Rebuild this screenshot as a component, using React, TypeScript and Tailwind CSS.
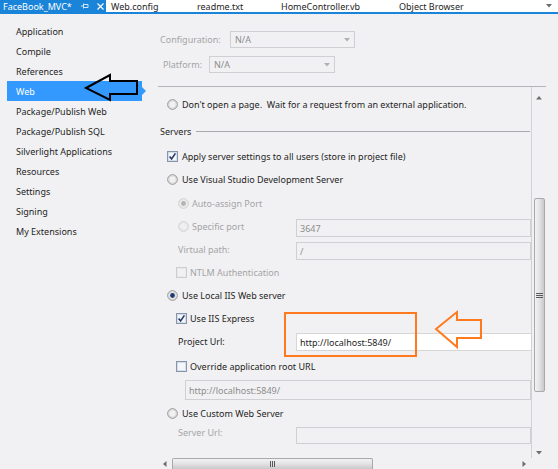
import React from "react";

// VS2012 project properties, "Web" tab
const navItems = [
  "Application",
  "Compile",
  "References",
  "Web",
  "Package/Publish Web",
  "Package/Publish SQL",
  "Silverlight Applications",
  "Resources",
  "Settings",
  "Signing",
  "My Extensions",
];

function Radio({ checked = false, disabled = false }: { checked?: boolean; disabled?: boolean }) {
  return (
    <svg width="11" height="11" viewBox="0 0 11 11" className="flex-none">
      <circle cx="5.5" cy="5.5" r="4.8" fill={disabled ? "#efeff1" : "#f1f1f1"} stroke={disabled ? "#cdcdcd" : "#8d8d8d"} />
      <circle cx="5.5" cy="5.5" r="3.6" fill="none" stroke={disabled ? "#e6e6e6" : "#d6d6d6"} strokeWidth="0.8" />
      {checked && <circle cx="5.5" cy="5.5" r="2.4" fill={disabled ? "#b3b3b3" : "#1c3c70"} />}
    </svg>
  );
}

function Check({ checked = false, disabled = false }: { checked?: boolean; disabled?: boolean }) {
  return (
    <svg width="11" height="11" viewBox="0 0 11 11" className="flex-none">
      <rect x="0.5" y="0.5" width="10" height="10" fill={disabled ? "#f1f1f3" : "#f4f6fa"} stroke={disabled ? "#cdcdcd" : "#8795ab"} />
      <rect x="1.5" y="1.5" width="8" height="8" fill="none" stroke={disabled ? "#e8e8e8" : "#cdd6e6"} strokeWidth="0.8" />
      {checked && <path d="M2.6 5.4 L4.6 7.9 L8.4 2.4" fill="none" stroke="#27376a" strokeWidth="1.6" />}
    </svg>
  );
}

function Select({ w, text }: { w: string; text: string }) {
  return (
    <div className={`${w} h-[17px] flex items-center border border-[#cfcfd4] bg-[#f1f1f3] pl-[4px] pr-[4px] text-[#8c8c8c]`}>
      <span className="flex-1">{text}</span>
      <svg width="6" height="4" viewBox="0 0 6 4">
        <path d="M0 0 H6 L3 3.5 Z" fill="#b0b0b0" />
      </svg>
    </div>
  );
}

function Box({ text = "", white = false, h = "h-[18px]", extra = "" }: { text?: string; white?: boolean; h?: string; extra?: string }) {
  return (
    <div
      className={`${h} ${extra} flex-1 flex items-center pl-[3px] border ${
        white ? "bg-white border-[#d6d6d6] border-r-0 text-[#1e1e1e]" : "bg-[#f1f1f3] border-[#cfcfd4] text-[#8c8c8c]"
      }`}
    >
      {text}
    </div>
  );
}

function TabBar() {
  return (
    <div className="h-[14px] flex items-stretch bg-white border-b-2 border-[#1a84d8] text-[#1e1e1e]">
      <div className="w-[106px] flex items-center bg-[#1a84d8] text-white pl-[3px]">
        <span>FaceBook_MVC*</span>
        <svg width="8" height="6" viewBox="0 0 8 6" className="ml-[9px]">
          <path d="M0 3 H2.5 M2.5 0.5 V5.5 M2.5 1.5 H7 V4.5 H2.5" fill="none" stroke="#cfe6fa" strokeWidth="1" />
        </svg>
        <svg width="7" height="7" viewBox="0 0 7 7" className="ml-[8px]">
          <path d="M0.5 0.5 L6.5 6.5 M6.5 0.5 L0.5 6.5" stroke="#ffffff" strokeWidth="1.2" />
        </svg>
      </div>
      <div className="w-[86px] flex items-center pl-[5px]">Web.config</div>
      <div className="w-[84px] flex items-center pl-[5px]">readme.txt</div>
      <div className="w-[118px] flex items-center pl-[5px]">HomeController.vb</div>
      <div className="flex items-center pl-[5px]">Object Browser</div>
      <div className="ml-auto flex items-center pr-[6px]">
        <svg width="6" height="4" viewBox="0 0 6 4">
          <path d="M0 0 H6 L3 3.5 Z" fill="#6d6d6d" />
        </svg>
      </div>
    </div>
  );
}

function Nav() {
  return (
    <div className="w-[153px] flex-none pt-[7px]">
      {navItems.map((item) =>
        item === "Web" ? (
          <div key={item} className="relative h-[20px] ml-[7px] w-[135px] flex items-center pl-[9px] bg-[#3399ff] text-white">
            {item}
            <svg width="6" height="10" viewBox="0 0 6 10" className="absolute right-[-5px] top-[5px]">
              <path d="M0 0 L5 5 L0 10 Z" fill="#3399ff" />
            </svg>
          </div>
        ) : (
          <div key={item} className="h-[20px] flex items-center pl-[16px]">
            {item}
          </div>
        )
      )}
    </div>
  );
}

const muted = "text-[#a4a4a6]";

function Content() {
  return (
    <div className="flex-1 flex flex-col">
      {/* configuration / platform */}
      <div className="h-[72px] pt-[17px]">
        <div className="flex items-center h-[17px]">
          <span className={`ml-[7px] w-[70px] ${muted}`}>Configuration:</span>
          <Select w="w-[125px]" text="N/A" />
        </div>
        <div className="flex items-center h-[17px] mt-[8px]">
          <span className={`ml-[10px] w-[46px] ${muted}`}>Platform:</span>
          <Select w="w-[126px]" text="N/A" />
        </div>
      </div>

      {/* scrolling region */}
      <div className="ml-[5px] w-[388px] flex-1 flex flex-col border-t border-[#b4b4b8]">
        <div className="flex h-[371px]">
          <div className="w-[373px] overflow-hidden flex flex-col pt-[6px]">
            <div className="h-[23px] flex items-center pl-[9px] gap-[4px] whitespace-nowrap">
              <Radio />
              <span>Don't open a page.&nbsp; Wait for a request from an external application.</span>
            </div>

            <div className="h-[23px] mt-[4px] flex items-center pl-[2px]">
              <span>Servers</span>
              <div className="flex-1 h-px bg-[#a9a9ad] ml-[5px] mr-[1px]" />
            </div>

            <div className="h-[23px] mt-[2px] flex items-center pl-[9px] gap-[4px] whitespace-nowrap">
              <Check checked />
              <span>Apply server settings to all users (store in project file)</span>
            </div>
            <div className="h-[23px] flex items-center pl-[9px] gap-[4px]">
              <Radio />
              <span>Use Visual Studio Development Server</span>
            </div>

            <div className={`h-[23px] mt-[1px] flex items-center pl-[20px] gap-[3px] ${muted}`}>
              <Radio checked disabled />
              <span>Auto-assign Port</span>
            </div>
            <div className={`h-[23px] flex items-center pl-[20px] ${muted}`}>
              <Radio disabled />
              <span className="ml-[3px] w-[104px]">Specific port</span>
              <Box text="3647" extra="mt-[3px]" />
            </div>
            <div className={`h-[23px] flex items-center pl-[20px] ${muted}`}>
              <span className="w-[118px]">Virtual path:</span>
              <Box text="/" extra="mt-[3px]" />
            </div>
            <div className={`h-[23px] flex items-center pl-[18px] gap-[3px] ${muted}`}>
              <Check disabled />
              <span>NTLM Authentication</span>
            </div>

            <div className="h-[23px] flex items-center pl-[9px] gap-[4px]">
              <Radio checked />
              <span>Use Local IIS Web server</span>
            </div>
            <div className="h-[23px] flex items-center pl-[18px] gap-[3px]">
              <Check checked />
              <span>Use IIS Express</span>
            </div>
            <div className="h-[23px] flex items-center pl-[20px]">
              <span className="w-[118px]">Project Url:</span>
              <Box text="http://localhost:5849/" white extra="mt-[1px]" />
            </div>

            <div className="h-[23px] mt-[2px] flex items-center pl-[18px] gap-[3px]">
              <Check />
              <span>Override application root URL</span>
            </div>
            <div className="h-[24px] flex items-center pl-[27px]">
              <Box text="http://localhost:5849/" h="h-[20px]" />
            </div>

            <div className="h-[23px] flex items-center pl-[9px] gap-[4px]">
              <Radio />
              <span>Use Custom Web Server</span>
            </div>
            <div className={`h-[20px] flex items-center pl-[20px] ${muted}`}>
              <span className="w-[118px] mb-[6px]">Server Url:</span>
              <Box h="h-[17px]" />
            </div>
          </div>

          {/* vertical scrollbar */}
          <div className="w-[15px] flex flex-col items-center border-l border-[#d2d2d6]">
            <div className="h-[111px] w-full flex justify-center pt-[9px]">
              <svg width="6" height="4" viewBox="0 0 6 4">
                <path d="M0 3.5 H6 L3 0 Z" fill="#6d6d6d" />
              </svg>
            </div>
            <div className="h-[194px] w-[11px] ml-[1px] rounded-[2px] border border-[#a9a9ad] bg-gradient-to-r from-[#f2f2f2] via-[#e2e2e4] to-[#c9c9cc] flex items-center justify-center">
              <svg width="7" height="5" viewBox="0 0 7 5">
                <path d="M0 0.5 H7 M0 2.5 H7 M0 4.5 H7" stroke="#5a5a5a" strokeWidth="1" />
              </svg>
            </div>
            <div className="flex-1 w-full flex justify-center items-end pb-[3px]">
              <svg width="6" height="4" viewBox="0 0 6 4">
                <path d="M0 0 H6 L3 3.5 Z" fill="#6d6d6d" />
              </svg>
            </div>
          </div>
        </div>

        {/* horizontal scrollbar */}
        <div className="flex-1 flex items-center relative">
          <div className="w-[14px] flex justify-center">
            <svg width="4" height="6" viewBox="0 0 4 6">
              <path d="M3.5 0 V6 L0 3 Z" fill="#6d6d6d" />
            </svg>
          </div>
          <div className="w-[201px] h-full rounded-t-[2px] border border-b-0 border-[#a9a9ad] bg-gradient-to-b from-[#f2f2f2] via-[#e2e2e4] to-[#c9c9cc] flex justify-center items-center">
            <svg width="5" height="6" viewBox="0 0 5 6">
              <path d="M0.5 0 V6 M2.5 0 V6 M4.5 0 V6" stroke="#5a5a5a" strokeWidth="1" />
            </svg>
          </div>
          <div className="ml-[149px]">
            <svg width="4" height="6" viewBox="0 0 4 6">
              <path d="M0.5 0 V6 L4 3 Z" fill="#6d6d6d" />
            </svg>
          </div>
        </div>
      </div>
    </div>
  );
}

function Annotations() {
  return (
    <svg className="absolute left-0 top-0 pointer-events-none" width="558" height="469" viewBox="0 0 558 469">
      {/* black arrow pointing at Web */}
      <path d="M86 88 L110 75 L110 81 L137 81 L137 94 L110 94 L110 100 Z" fill="none" stroke="#000" strokeWidth="2" strokeLinejoin="miter" />
      {/* orange highlight of the project url */}
      <rect x="285" y="313" width="131" height="43" fill="none" stroke="#ff7a1e" strokeWidth="2" />
      <path d="M436 329 L457 312 L457 320 L481 320 L481 338 L457 338 L457 347 Z" fill="none" stroke="#ff7a1e" strokeWidth="2" />
    </svg>
  );
}

export default function App() {
  return (
    <div className="w-[558px] h-[469px] relative overflow-hidden bg-[#f1f1f3] text-[9px] leading-none text-[#1e1e1e] font-['Noto_Sans',sans-serif]">
      <TabBar />
      <div className="flex h-[455px]">
        <Nav />
        <Content />
      </div>
      <Annotations />
    </div>
  );
}
